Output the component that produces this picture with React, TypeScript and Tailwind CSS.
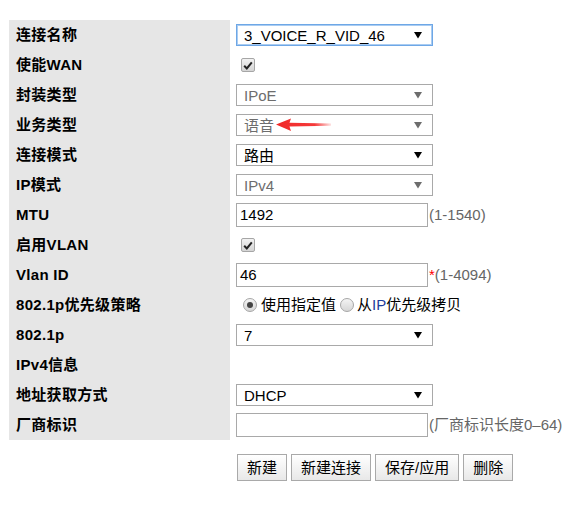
import type { ReactNode } from 'react';

const FONT = "font-['Liberation_Sans','Noto_Sans_CJK_SC',sans-serif]";

function Arrow({ disabled }: { disabled?: boolean }) {
    return (
        <svg width="10" height="8" viewBox="0 0 10 8" className="shrink-0">
            <polygon points="1,1 9,1 5,7.5" fill={disabled ? '#6d6d6d' : '#000'} />
        </svg>
    );
}

function Select({ value, disabled, focused, children }: { value: string; disabled?: boolean; focused?: boolean; children?: ReactNode }) {
    return (
        <div
            className={`relative flex items-center justify-between w-[197px] h-[22px] pl-[7px] pr-[9px] bg-white border ${
                focused ? 'border-[#6ea7e6] shadow-[inset_0_0_0_1px_#a9ccf2]' : 'border-[#a9a9a9]'
            } ${disabled ? 'text-[#6d6d6d]' : 'text-black'}`}
        >
            <span className="leading-none">{value}</span>
            {children}
            <Arrow disabled={disabled} />
        </div>
    );
}

function TextInput({ value }: { value?: string }) {
    return (
        <div className="flex items-center w-[192px] h-[24px] pl-[3px] bg-white border border-[#a9a9a9] text-black">
            {value}
        </div>
    );
}

function Checkbox() {
    return (
        <div className="ml-[5px] w-[14px] h-[14px] rounded-[2px] border border-[#a6a6a6] bg-gradient-to-b from-[#f2f2f2] to-[#d4d4d4] flex items-center justify-center">
            <svg width="10" height="9" viewBox="0 0 10 9">
                <path d="M1.2 4.8 L3.8 7.4 L8.8 1.4" stroke="#222" strokeWidth="2" fill="none" />
            </svg>
        </div>
    );
}

function Radio({ checked }: { checked?: boolean }) {
    return (
        <div className="w-[14px] h-[14px] rounded-full border border-[#a6a6a6] bg-gradient-to-b from-[#f4f4f4] to-[#d6d6d6] flex items-center justify-center">
            {checked && <div className="w-[6px] h-[6px] rounded-full bg-[#444]" />}
        </div>
    );
}

function Hint({ children }: { children: ReactNode }) {
    return <span className="ml-[1px] text-[#666]">{children}</span>;
}

function Row({ label, children }: { label: string; children?: ReactNode }) {
    return (
        <div className="flex h-[30px]">
            <div className="w-[221px] shrink-0 bg-[#e6e6e6] pl-[7px] flex items-center font-bold text-black tracking-[0.3px]">{label}</div>
            <div className="pl-[6px] flex items-center">{children}</div>
        </div>
    );
}

function Btn({ children }: { children: ReactNode }) {
    return (
        <button className="h-[27px] px-[9px] border border-[#a9a9a9] bg-gradient-to-b from-white to-[#e8e8e8] text-black leading-none">
            {children}
        </button>
    );
}

export default function App() {
    return (
        <div className={`${FONT} text-[15px] bg-white w-[588px] h-[509px] pt-[20px] pl-[9px]`}>
            <Row label="连接名称">
                <Select value="3_VOICE_R_VID_46" focused />
            </Row>
            <Row label="使能WAN">
                <Checkbox />
            </Row>
            <Row label="封装类型">
                <Select value="IPoE" disabled />
            </Row>
            <Row label="业务类型">
                <Select value="语音" disabled>
                    {/* red pointer arrow from the screenshot annotation */}
                    <svg width="56" height="14" viewBox="0 0 56 14" className="absolute left-[39px] top-[3px]">
                        <defs>
                            <linearGradient id="ar" x1="0" x2="1" y1="0" y2="0">
                                <stop offset="0" stopColor="#f02828" />
                                <stop offset="0.7" stopColor="#f53a3a" />
                                <stop offset="1" stopColor="#f53a3a" stopOpacity="0.15" />
                            </linearGradient>
                        </defs>
                        <polygon points="0,6.5 15,0.5 13.5,4.8 55,5.6 55,7.8 13.5,8.6 15,13" fill="url(#ar)" />
                    </svg>
                </Select>
            </Row>
            <Row label="连接模式">
                <Select value="路由" />
            </Row>
            <Row label="IP模式">
                <Select value="IPv4" disabled />
            </Row>
            <Row label="MTU">
                <TextInput value="1492" />
                <Hint>(1-1540)</Hint>
            </Row>
            <Row label="启用VLAN">
                <Checkbox />
            </Row>
            <Row label="Vlan ID">
                <TextInput value="46" />
                <span className="ml-[1px] text-[#ff0000]">*</span>
                <span className="text-[#666]">(1-4094)</span>
            </Row>
            <Row label="802.1p优先级策略">
                <div className="flex items-center ml-[7px] text-black">
                    <Radio checked />
                    <span className="ml-[4px]">使用指定值</span>
                    <span className="ml-[4px]"><Radio /></span>
                    <span className="ml-[3px]">从<span className="text-[#1d3c9c]">IP</span>优先级拷贝</span>
                </div>
            </Row>
            <Row label="802.1p">
                <Select value="7" />
            </Row>
            <Row label="IPv4信息" />
            <Row label="地址获取方式">
                <Select value="DHCP" />
            </Row>
            <Row label="厂商标识">
                <TextInput />
                <Hint>(厂商标识长度0–64)</Hint>
            </Row>
            <div className="flex gap-[4px] mt-[14px] ml-[228px]">
                <Btn>新建</Btn>
                <Btn>新建连接</Btn>
                <Btn>保存/应用</Btn>
                <Btn>删除</Btn>
            </div>
        </div>
    );
}
